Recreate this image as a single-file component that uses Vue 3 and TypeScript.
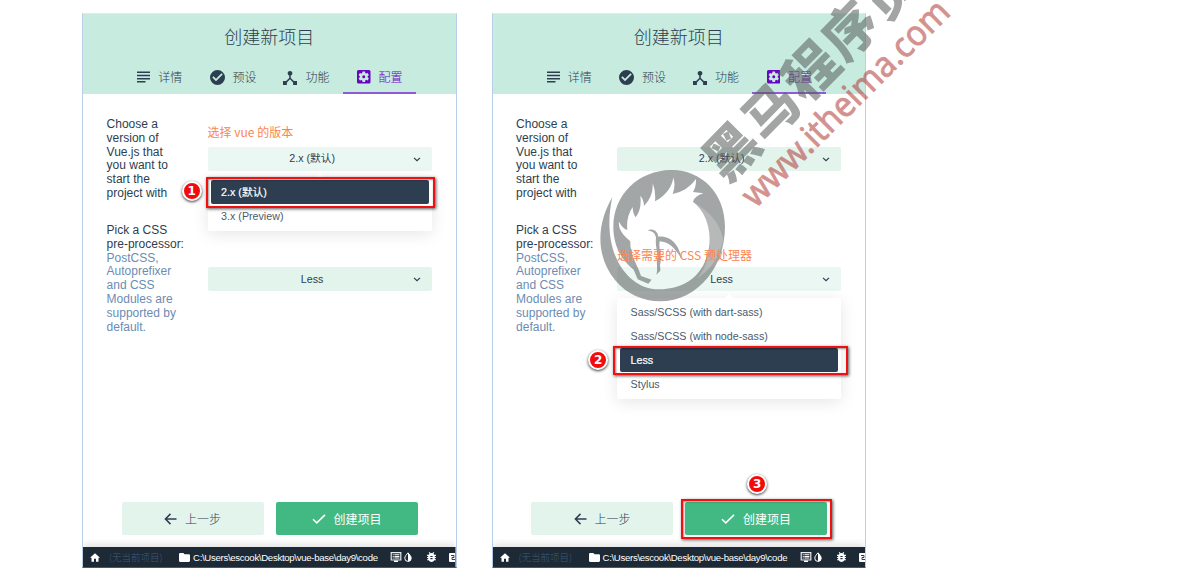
<script setup lang="ts">
interface Field {
  text: string
  note: string
  value: string
  label: string
  options: string[]
  open: boolean
  badge: string
}
interface Panel {
  id: number
  fields: Field[]
  submitBadge: string
}

const tabs = [
  { name: '详情', icon: 'lines' },
  { name: '预设', icon: 'check' },
  { name: '功能', icon: 'nodes' },
  { name: '配置', icon: 'gear' },
]

const versionText = 'Choose a\nversion of\nVue.js that\nyou want to\nstart the\nproject with'
const cssText = 'Pick a CSS\npre-processor:'
const cssNote = 'PostCSS,\nAutoprefixer\nand CSS\nModules are\nsupported by\ndefault.'
const versions = ['2.x (默认)', '3.x (Preview)']
const processors = ['Sass/SCSS (with dart-sass)', 'Sass/SCSS (with node-sass)', 'Less', 'Stylus']

const panels: Panel[] = [
  {
    id: 1,
    submitBadge: '',
    fields: [
      { text: versionText, note: '', value: '2.x (默认)', label: '选择 vue 的版本', options: versions, open: true, badge: '1' },
      { text: cssText, note: cssNote, value: 'Less', label: '', options: processors, open: false, badge: '' },
    ],
  },
  {
    id: 2,
    submitBadge: '3',
    fields: [
      { text: versionText, note: '', value: '2.x (默认)', label: '', options: versions, open: false, badge: '' },
      { text: cssText, note: cssNote, value: 'Less', label: '选择需要的 CSS 预处理器', options: processors, open: true, badge: '2' },
    ],
  },
]
</script>

<template>
  <div class="page">
    <section v-for="p in panels" :key="p.id" class="panel">
      <header class="head">
        <h1 class="title">创建新项目</h1>
        <nav class="tabs">
          <div v-for="t in tabs" :key="t.icon" class="tab" :class="{ active: t.icon === 'gear' }">
            <svg v-if="t.icon === 'lines'" class="i-lines" viewBox="0 0 13 12"><path d="M0 .5h13v1.500H0zM0 3.700h13v1.500H0zM0 6.900h13v1.500H0zM0 10.100h8.500v1.500H0z" /></svg>
            <svg v-else-if="t.icon === 'check'" class="i-check" viewBox="2 2 20 20"><path d="M12 2a10 10 0 1 0 0 20 10 10 0 0 0 0-20zm-2 15-5-5 1.700-1.700 3.300 3.300 7.300-7.300L19 8z" /></svg>
            <svg v-else-if="t.icon === 'nodes'" class="i-nodes" viewBox="3 2 18 19"><path d="M17 16l-4-4V8.820A3 3 0 1 0 11 8.820V12l-4 4H3v5h5v-3.050l4-4.200 4 4.200V21h5v-5z" /></svg>
            <svg v-else class="i-gear" viewBox="3 3 18 18"><path d="M12 10a2 2 0 1 0 0 4 2 2 0 0 0 0-4zm7-7H5a2 2 0 0 0-2 2v14c0 1.100.9 2 2 2h14a2 2 0 0 0 2-2V5a2 2 0 0 0-2-2zm-1.750 9c0 .23-.02.46-.05.68l1.480 1.160c.13.11.17.3.08.45l-1.400 2.420c-.09.15-.27.21-.43.15l-1.740-.7c-.36.28-.76.51-1.180.69l-.26 1.850c-.03.17-.18.3-.35.3h-2.800c-.17 0-.32-.13-.35-.29l-.26-1.850c-.43-.18-.82-.41-1.180-.69l-1.740.7c-.16.06-.34 0-.43-.15l-1.400-2.420a.35.35 0 0 1 .08-.45l1.480-1.160a5 5 0 0 1 0-1.370l-1.480-1.160a.35.35 0 0 1-.08-.45l1.400-2.420c.09-.15.27-.21.43-.15l1.740.7c.36-.28.76-.51 1.180-.69l.26-1.850c.03-.17.18-.3.35-.3h2.800c.17 0 .32.13.35.29l.26 1.850c.43.18.82.41 1.180.69l1.740-.7c.16-.06.34 0 .43.15l1.400 2.420c.09.15.05.34-.08.45l-1.480 1.160c.03.23.05.46.05.69z" /></svg>
            <span>{{ t.name }}</span>
          </div>
        </nav>
      </header>

      <main class="body">
        <div v-for="(f, i) in p.fields" :key="i" class="field" :class="'row' + i">
          <div class="desc">{{ f.text }}<div class="note">{{ f.note }}</div></div>
          <div class="control">
            <div class="hint">{{ f.label }}</div>
            <div class="select" :class="{ opened: f.open }">
              <span class="value">{{ f.value }}</span>
              <svg class="chev" viewBox="0 0 8 5"><path d="M1 .9l3 2.800 3-2.800" /></svg>
              <div v-if="f.open" class="menu">
                <div v-for="o in f.options" :key="o" class="option" :class="{ picked: o === f.value }">
                  {{ o }}
                  <div v-if="o === f.value" class="frame" :class="'frame' + p.id"></div>
                  <b v-if="o === f.value" class="badge" :class="'badge' + p.id">{{ f.badge }}</b>
                </div>
              </div>
            </div>
          </div>
        </div>
      </main>

      <div class="actions">
        <div class="btn back">
          <svg class="i-back" viewBox="0 0 13 12"><path d="M12.500 6H1.500M6.500 .9L1.400 6l5.100 5.100" /></svg>
          <span>上一步</span>
        </div>
        <div class="btn go">
          <svg class="i-ok" viewBox="0 0 14 10"><path d="M1 5.200l3.800 3.700L13 .9" /></svg>
          <span>创建项目</span>
          <template v-if="p.submitBadge">
            <div class="frame frame3"></div>
            <b class="badge badge3">{{ p.submitBadge }}</b>
          </template>
        </div>
      </div>

      <footer class="bar">
        <svg class="i-home" viewBox="2 3 20 17"><path d="M10 20v-6h4v6h5v-8h3L12 3 2 12h3v8z" /></svg>
        <span class="none">(无当前项目)</span>
        <svg class="i-folder" viewBox="2 4 20 16"><path d="M10 4H4a2 2 0 0 0-2 2v12c0 1.100.9 2 2 2h16a2 2 0 0 0 2-2V8a2 2 0 0 0-2-2h-8z" /></svg>
        <span class="path">C:\Users\escook\Desktop\vue-base\day9\code</span>
        <svg class="i-log" viewBox="0 0 12 10"><path d="M1.200.7h9.600v7.300H1.200z" fill="none" stroke="#e8edf0" stroke-width="1.200" /><path d="M2.700 2.300h1v1h-1zM4.400 2.300h5v1h-5zM2.700 3.900h1v1h-1zM4.400 3.900h5v1h-5zM2.700 5.500h1v1h-1zM4.400 5.500h5v1h-5zM4 8.500h4V10H4z" /></svg>
        <svg class="i-drop" viewBox="0 0 8 10"><path d="M4 .8C2.500 2.600.8 4.300.8 6.200a3.200 3.200 0 0 0 6.400 0C7.200 4.300 5.500 2.600 4 .8z" fill="none" stroke="#fff" stroke-width="1" /><path d="M4 .8C5.500 2.600 7.200 4.300 7.200 6.200A3.200 3.200 0 0 1 4 9.400z" /></svg>
        <svg class="i-bug" viewBox="4 3 16 18"><path d="M20 8h-2.810a6 6 0 0 0-1.820-1.960L17 4.410 15.590 3l-2.170 2.170a6 6 0 0 0-2.830 0L8.410 3 7 4.410l1.620 1.630A6 6 0 0 0 6.810 8H4v2h2.090L6 11v1H4v2h2v1l.09 1H4v2h2.810a6 6 0 0 0 10.380 0H20v-2h-2.090L18 15v-1h2v-2h-2v-1l-.09-1H20zm-6 8h-4v-2h4zm0-4h-4v-2h4z" /></svg>
        <svg class="i-clip" viewBox="0 0 6 9"><path d="M1 0h5v9H1a1 1 0 0 1-1-1V1a1 1 0 0 1 1-1z" /><path d="M2 2.500h3v2H3v2h3" fill="none" stroke="#1d2935" stroke-width=".9" /></svg>
      </footer>
    </section>

    <svg class="mark" viewBox="0 0 1191 568">
      <g transform="translate(595 165) scale(.33333)">
        <path class="gray" d="M52 97C3 180 3 275 60 345C115 412 205 425 275 390C350 350 390 270 390 185C390 85 320 15 230 15C130 15 55 90 55 185C55 240 78 285 116 314L128 343L160 356L170 344L138 333C128 300 104 268 106 229L94 218C80 205 70 190 72 170Q82 190 97 195Q93 155 113 126Q113 145 122 157Q141 132 136 92Q147 105 147 123Q176 93 173 54Q183 80 180 109Q228 82 235 38Q243 60 233 87Q278 78 303 42Q304 65 294 81L325 85Q299 93 294 110C332 140 348 190 343 240C335 310 290 373 190 373C100 373 15 265 52 97Z" />
        <path class="shine" d="M294 110C350 145 375 175 385 225C370 285 340 320 306 340C340 300 347 260 343 220C342 170 325 135 294 110Z" />
        <path class="gray" d="M158 196C170 189 188 196 190 215C225 212 252 236 259 281C242 252 222 230 194 229C190 255 202 275 195 300L196 317L184 329C190 310 182 300 188 275C188 258 180 245 183 218C180 204 173 199 158 196Z" />
      </g>
      <text class="brand" transform="translate(726.500 184.500) rotate(-45.500)" textLength="280" lengthAdjust="spacing">黑马程序员</text>
      <text class="site" transform="translate(755.500 209) rotate(-44.800)" textLength="277" lengthAdjust="spacingAndGlyphs">www.itheima.com</text>
    </svg>
  </div>
</template>

<style>
html,
body {
  margin: 0;
  background: #fff;
  overflow: hidden;
}
</style>

<style scoped>
.page {
  position: relative;
  box-sizing: border-box;
  width: 1191px;
  height: 568px;
  padding: 13px 0 0 82px;
  display: flex;
  gap: 35px;
  overflow: hidden;
  font-family: "Liberation Sans", "Noto Sans CJK SC", sans-serif;
  color: #2c3e50;
}
.page * {
  box-sizing: border-box;
}
.panel {
  width: 374.500px;
  height: 555px;
  flex: none;
  display: flex;
  flex-direction: column;
  border: 1px solid #b9cfe8;
  border-top-color: #d7edf0;
  border-bottom: 1px solid #2c5f8a;
}
.head {
  height: 80px;
  flex: none;
  background: #c7ebdf;
  display: flex;
  flex-direction: column;
}
.title {
  margin: 0;
  height: 47px;
  line-height: 45px;
  text-align: center;
  font-size: 18px;
  font-weight: 300;
  font-family: "Noto Sans CJK SC", sans-serif;
}
.tabs {
  display: flex;
  justify-content: center;
  flex: 1;
}
.tab {
  width: 73.400px;
  display: flex;
  align-items: center;
  justify-content: center;
  gap: 8px;
  padding: 1px 0 0 1px;
  font: 300 12px/30px "Noto Sans CJK SC", sans-serif;
  border-bottom: 2px solid transparent;
}
.tab svg {
  fill: #2c3e50;
  flex: none;
}
.tab.active {
  color: #6806c1;
  border-color: #8e5bd6;
}
.tab.active svg {
  fill: #6806c1;
}
.i-lines { width: 13px; height: 12px; }
.i-check { width: 15px; height: 15px; }
.i-nodes { width: 14px; height: 15px; }
.i-gear { width: 13.500px; height: 13.500px; }
.body {
  flex: 1;
  padding: 24px 0 0 23.600px;
  font-size: 12px;
}
.field {
  display: grid;
  grid-template-columns: 101px 224px;
}
.row0 { height: 106px; }
.desc {
  line-height: 13.800px;
  white-space: pre;
}
.note {
  color: #6c8cb3;
}
.hint {
  height: 24px;
  font: 400 12px/24px "Noto Sans CJK SC", sans-serif;
  color: #fb8552;
  white-space: nowrap;
  position: relative;
  z-index: 6;
}
.row0 .control { padding-top: 2px; }
.row1 .control { padding-top: 19px; }
.row0 .select { margin-top: 3px; }
.select {
  position: relative;
  height: 24px;
  border-radius: 2px;
  background: #e3f4ed;
  display: flex;
  align-items: center;
  padding-right: 11px;
  font-size: 10.700px;
}
.select.opened { background: #eaf7f2; }
.value {
  flex: 1;
  height: 24px;
  line-height: 22px;
  text-align: center;
  padding-left: 4px;
}
.row1 .value { line-height: 24px; }
.chev {
  width: 8px;
  height: 5px;
  fill: none;
  stroke: #2c3e50;
  stroke-width: 1.200;
}
.menu {
  position: absolute;
  top: 31px;
  left: 0;
  width: 224px;
  padding: 2px 3px 3px;
  background: #fff;
  border-radius: 2px;
  box-shadow: 0 3px 16px rgba(0, 0, 0, .1);
  color: #4b5b6b;
}
.menu::before {
  content: "";
  position: absolute;
  top: -4px;
  left: 108px;
  border: 4px solid transparent;
  border-top: 0;
  border-bottom-color: #fff;
}
.option {
  position: relative;
  height: 24px;
  line-height: 24px;
  padding-left: 10.500px;
  border-radius: 2px;
}
.option.picked {
  background: #2c3e50;
  color: #fff;
  -webkit-text-stroke: .2px #fff;
}
.frame {
  position: absolute;
  border: 2px solid #f01010;
  box-shadow: 1px 1px 3px rgba(0, 0, 0, .65), inset 1px 1px 2px rgba(0, 0, 0, .4);
}
.frame1 { left: -5px; top: -3px; width: 229px; height: 31px; }
.frame2 { left: -7px; top: -2px; width: 235px; height: 29px; }
.frame3 { left: -4px; top: -3px; width: 151px; height: 40px; }
.badge {
  position: absolute;
  width: 20px;
  height: 20px;
  border-radius: 50%;
  border: 2px solid #fff;
  background: #f30b0b;
  color: #fff;
  font: 700 12px/16px "DejaVu Sans", sans-serif;
  text-align: center;
  -webkit-text-stroke: 0;
  box-shadow: 0 1px 3px rgba(0, 0, 0, .8);
}
.badge1 { left: -29px; top: 1px; }
.badge2 { left: -32px; top: 2px; }
.badge3 { left: 62px; top: -28px; }
.actions {
  display: flex;
  gap: 12px;
  padding-left: 38.600px;
  height: 45px;
  flex: none;
}
.btn {
  position: relative;
  height: 33px;
  width: 142px;
  border-radius: 2px;
  display: flex;
  align-items: center;
  justify-content: center;
  gap: 8px;
  font: 300 12px/33px "Noto Sans CJK SC", sans-serif;
}
.btn svg { fill: none; stroke-width: 1.500; }
.back { background: #e3f4ed; }
.back svg { stroke: #2c3e50; }
.go { background: #42b983; color: #fff; font-weight: 400; }
.go svg { stroke: #fff; }
.i-back { width: 13px; height: 12px; }
.i-ok { width: 14px; height: 10px; }
.bar {
  height: 20px;
  flex: none;
  background: #1d2935;
  box-shadow: 0 -2px 8px rgba(0, 0, 0, .14);
  display: flex;
  align-items: center;
  padding-left: 7px;
  overflow: hidden;
  clip-path: inset(-8px 0 0 0);
  font-size: 10px;
  color: #fff;
  white-space: nowrap;
}
.bar svg { fill: #fff; flex: none; }
.bar span { flex: none; }
.i-home { width: 10px; height: 9px; }
.none {
  width: 61px;
  margin-left: 9px;
  color: #3e5c7a;
  font: 300 9.500px/20px "Noto Sans CJK SC", sans-serif;
}
.i-folder { width: 11px; height: 9px; margin-left: 9px; }
.path { width: 185px; margin-left: 3px; font-size: 9.600px; letter-spacing: -.3px; }
.i-log { width: 12px; height: 10px; margin-left: 12px; }
.i-drop { width: 8px; height: 10px; margin-left: 2px; }
.i-bug { width: 9px; height: 10px; margin-left: 15px; }
.i-clip { width: 6px; height: 9px; margin-left: 13px; }
.mark {
  position: absolute;
  left: 0;
  top: 0;
  width: 1191px;
  height: 568px;
  z-index: 5;
  pointer-events: none;
}
.gray { fill: #585c5c; opacity: .55; }
.shine { fill: #fff; opacity: .22; }
.brand {
  font: 900 54px "Noto Sans CJK SC", sans-serif;
  fill: #585c5c;
  opacity: .55;
}
.site {
  font: 400 35px "Noto Sans", sans-serif;
  fill: #b03836;
  stroke: #b03836;
  stroke-width: .8;
  opacity: .55;
}
</style>
